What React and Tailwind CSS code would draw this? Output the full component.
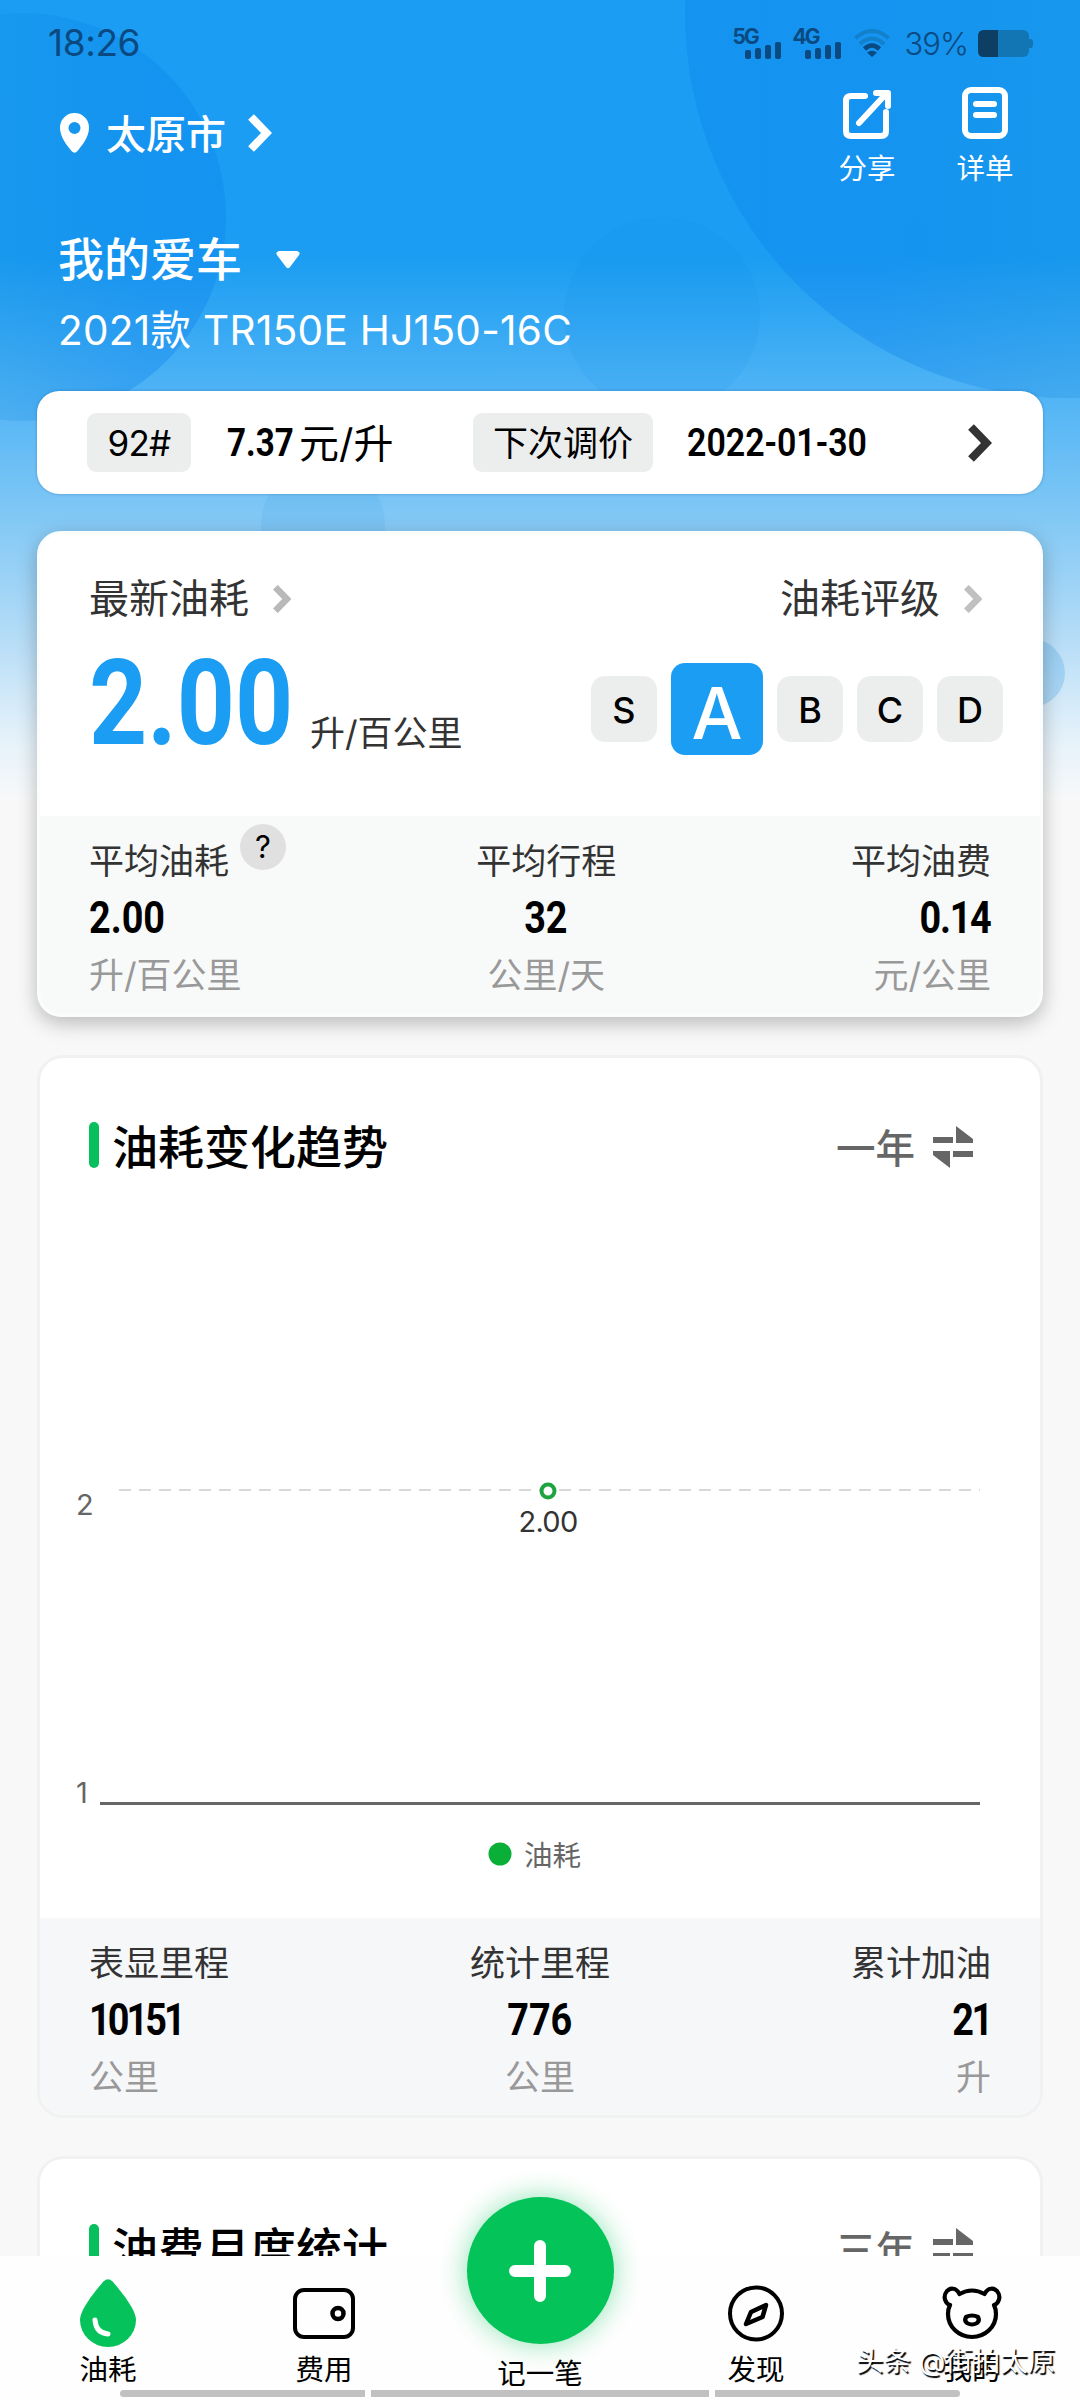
const tripStats = [
  { label: '平均油耗', value: '2.00', unit: '升/百公里', help: true },
  { label: '平均行程', value: '32', unit: '公里/天' },
  { label: '平均油费', value: '0.14', unit: '元/公里', fit: 'tracking-[-1.5px]' },
];

const totalStats = [
  { label: '表显里程', value: '10151', unit: '公里', fit: 'tracking-[-3.5px]' },
  { label: '统计里程', value: '776', unit: '公里' },
  { label: '累计加油', value: '21', unit: '升', fit: 'tracking-[-3px]' },
];

const grades = ['S', 'A', 'B', 'C', 'D'];

const Chevron = ({ className, width = 8 }) => (
  <svg viewBox="0 0 24 38" fill="none" stroke="currentColor" strokeWidth={width} className={className}>
    <path d="M3 3 L18.5 19 L3 35" />
  </svg>
);

const Signal = ({ label }) => (
  <div className="relative w-[48px] h-[32px]">
    <span className="absolute left-0 top-0 text-[21px] leading-[20px] font-bold tracking-[-2px]">{label}</span>
    <svg viewBox="0 0 36 17" className="absolute right-0 bottom-0 w-[36px] h-[17px]" fill="currentColor">
      <rect x="0" y="8" width="6" height="9" rx="2" />
      <rect x="10" y="6" width="6" height="11" rx="2" />
      <rect x="20" y="3" width="6" height="14" rx="2" />
      <rect x="30" y="0" width="6" height="17" rx="2" />
    </svg>
  </div>
);

const SwapIcon = () => (
  <svg viewBox="0 0 40 42" className="w-[40px] h-[42px] mt-[4px]" fill="#666">
    <path d="M0 11h20v6H0zM23 0l17 13v4H23zM0 25h17v17L0 29zM20 25h20v6H20z" />
  </svg>
);

const StatusBar = () => (
  <div className="h-[84px] shrink-0 pt-[25px] pl-[48px] pr-[47px] flex items-start justify-between text-[#0b4a80]">
    <span className="text-[37px] leading-[36px] tracking-[-0.4px]">18:26</span>
    <div className="flex items-start">
      <div className="flex gap-[12px] pt-[2px]">
        <Signal label="5G" />
        <Signal label="4G" />
      </div>
      <svg viewBox="0 0 36 28" className="w-[36px] h-[28px] ml-[13px] mt-[4px]" fill="none" strokeWidth="4">
        <path d="M1.5 9 Q18 -5 34.5 9" stroke="#1280cb" />
        <path d="M6 15 Q18 4 30 15" stroke="#1280cb" />
        <path d="M10.5 20 Q18 13 25.5 20" stroke="currentColor" strokeWidth="4.5" />
        <path d="M13 23.5 Q18 20 23 23.5 L18 28z" fill="currentColor" />
      </svg>
      <span className="ml-[15px] mt-[3px] text-[31px] leading-[31px] font-light tracking-[-1px]">39%</span>
      <svg viewBox="0 0 55 28" className="w-[55px] h-[28px] ml-[10px] mt-[5px]">
        <rect x="0" y="0" width="51" height="27" rx="6" fill="#1275b4" />
        <path d="M50 9h3q2 0 2 4.500t-2 4.500h-3z" fill="#1275b4" />
        <path d="M20 0H6Q0 0 0 6v15q0 6 6 6h14z" fill="#0c3f63" />
      </svg>
    </div>
  </div>
);

const Backdrop = () => (
  <svg viewBox="0 0 1080 800" className="absolute left-0 top-0 w-[1080px] h-[800px]">
    <defs>
      <linearGradient id="sky" x1="0" y1="0" x2="0" y2="1">
        <stop offset="0" stopColor="#1a9df3" />
        <stop offset="0.32" stopColor="#1a9df2" />
        <stop offset="0.48" stopColor="#4cb2f5" />
        <stop offset="0.64" stopColor="#7fc7f5" />
        <stop offset="0.8" stopColor="#b6ddf7" />
        <stop offset="0.92" stopColor="#e4f1fa" />
        <stop offset="1" stopColor="#f8f9f9" />
      </linearGradient>
      {/* the two large discs fade out towards the screen edges */}
      <linearGradient id="discLeft" x1="0" y1="0" x2="1" y2="0">
        <stop offset="0.45" stopColor="#0a80d8" stopOpacity="0.16" />
        <stop offset="0.8" stopColor="#0a80ec" stopOpacity="0.34" />
      </linearGradient>
      <linearGradient id="discRight" x1="0" y1="0" x2="1" y2="0">
        <stop offset="0.25" stopColor="#0a80ec" stopOpacity="0.34" />
        <stop offset="0.5" stopColor="#0a80d8" stopOpacity="0.2" />
      </linearGradient>
    </defs>
    <rect width="1080" height="800" fill="url(#sky)" />
    <circle cx="22" cy="217" r="204" fill="url(#discLeft)" />
    <circle cx="1070" cy="13" r="385" fill="url(#discRight)" />
    <circle cx="662" cy="315" r="98" fill="#0c88e4" opacity="0.1" />
    <circle cx="323" cy="525" r="62" fill="#3d9fe0" opacity="0.14" />
    <circle cx="1031" cy="673" r="34" fill="#3d9fe0" opacity="0.27" />
  </svg>
);

const Header = () => (
  <div className="shrink-0 text-white">
    <div className="h-[138px] pl-[60px] pr-[66px] flex justify-between">
      <div className="flex items-center h-[98px]">
        <svg viewBox="0 0 29 40" className="w-[29px] h-[40px]" fill="#fff">
          <path fillRule="evenodd" d="M14.500 0a14.500 14.500 0 0 1 14.500 15c0 9-7 17.500-11.500 23q-3 3.500-6 0C7 32.500 0 24 0 15A14.500 14.500 0 0 1 14.500 0zm0 9a6 6 0 1 0 0 12 6 6 0 0 0 0-12z" />
        </svg>
        <span className="ml-[17px] mt-[3px] text-[40px] leading-[40px] font-medium">太原市</span>
        <Chevron className="w-[24px] h-[38px] ml-[22px]" />
      </div>
      <div className="flex gap-[60px] text-[28.5px] leading-[30px]">
        <div className="w-[58px] flex flex-col items-center">
          <svg viewBox="0 0 50 52" className="w-[50px] h-[52px] mt-[3px]" fill="none" stroke="#fff" strokeWidth="6" strokeLinecap="round" strokeLinejoin="round">
            <path d="M23 9H9Q4 9 4 14v30q0 5 5 5h30q5 0 5-5V25" />
            <path d="M17 36L43 8M34 6h12v13" />
          </svg>
          <span className="mt-[15px]">分享</span>
        </div>
        <div className="w-[58px] flex flex-col items-center">
          <svg viewBox="0 0 48 52" className="w-[48px] h-[52px] mt-[3px]" fill="none" stroke="#fff" strokeWidth="6" strokeLinecap="round">
            <rect x="4" y="3" width="40" height="46" rx="6" />
            <path d="M15 17h18M15 28h18" />
          </svg>
          <span className="mt-[15px]">详单</span>
        </div>
      </div>
    </div>
    <div className="pl-[58px] h-[76px] flex items-center">
      <span className="-mt-[2px] text-[46px] leading-[46px] font-medium">我的爱车</span>
      <svg viewBox="0 0 24 18" className="w-[24px] h-[18px] ml-[34px]" fill="#fff">
        <path d="M3 0h18q4 1 2 4L14 16q-2 2.500-4 0L1 4Q-1 1 3 0z" />
      </svg>
    </div>
    <div className="pl-[58px] h-[93px] pt-[9px] text-[40.5px] leading-[48px] tracking-[0.3px] whitespace-nowrap">2021款 TR150E HJ150-16C</div>
  </div>
);

const PriceCard = () => (
  <div className="h-[103px] mx-[37px] shrink-0 rounded-[22px] bg-white flex items-center pl-[50px] pr-[51px] text-black whitespace-nowrap shadow-[0_0_3px_rgba(0,60,110,0.35)]">
    <div className="w-[104px] h-[59px] pt-[2px] rounded-[9px] bg-[#eceeed] flex items-center justify-center text-[35px] tracking-[-0.7px]">92#</div>
    <div className="w-[245px] ml-[36px] flex items-center">
      <span className="w-[72px]"><span className="inline-block origin-left scale-x-[0.85] text-[39px] leading-[44px] font-bold font-[Roboto]">7.37</span></span>
      <span className="mt-[2px] text-[40px] leading-[44px]">元/升</span>
    </div>
    <div className="w-[180px] h-[59px] pt-[2px] ml-px rounded-[9px] bg-[#eceeed] flex items-center justify-center text-[35px]">下次调价</div>
    <span className="ml-[34px] inline-block origin-left scale-x-[0.87] text-[39px] leading-[44px] font-semibold font-[Roboto]">2022-01-30</span>
    <Chevron className="w-[24px] h-[38px] ml-auto text-[#333]" />
  </div>
);

const Stats = ({ items }) => (
  <div className="flex justify-between pl-[49px] pr-[49px] pt-[26px] whitespace-nowrap">
    {items.map((s, i) => {
      const align = i === 0 ? 'items-start' : i === 1 ? 'items-center' : 'items-end';
      const origin = i === 0 ? 'origin-left' : i === 1 ? 'origin-center' : 'origin-right';
      return (
        <div key={s.label} className={`flex flex-col ${align}`}>
          <div className="relative text-[35px] leading-[38px] text-[#333]">
            {s.label}
            {s.help && (
              <span className="absolute left-[151px] top-[-18px] w-[46px] h-[46px] rounded-full bg-[#e0e0e0] text-black text-[31px] leading-[46px] text-center">?</span>
            )}
          </div>
          <div className={`mt-[14px] h-[48px] text-[45px] leading-[48px] font-bold font-[Roboto] text-black scale-x-[0.84] ${origin} ${s.fit || ''}`}>{s.value}</div>
          <div className="mt-[14px] text-[35px] leading-[38px] text-[#999]">{s.unit}</div>
        </div>
      );
    })}
  </div>
);

const SummaryCard = () => (
  <div className="mx-[37px] mt-[37px] h-[486px] shrink-0 rounded-[24px] bg-white border-[3px] border-[#fbfdfd] overflow-hidden shadow-[0_6px_20px_rgba(0,0,0,0.26)] flex flex-col">
    <div className="h-[282px] pl-[49px] pr-[37px] text-[#333]">
      <div className="pt-[44px] flex items-center text-[40px] leading-[42px]">
        <span>最新油耗</span>
        <Chevron className="w-[18px] h-[28px] ml-[24px] text-[#b9b9b9]" width={9} />
        <span className="ml-auto">油耗评级</span>
        <Chevron className="w-[18px] h-[28px] ml-[24px] mr-[21px] text-[#c0c0c0]" width={9} />
      </div>
      <div className="mt-[43px] flex items-center">
        <div className="w-[221px] h-[92px] flex items-center">
          <span className="-mt-[11px] inline-block origin-left scale-x-[0.86] text-[118px] leading-[92px] font-bold font-[Roboto] text-[#1a9df2]">2.00</span>
        </div>
        <span className="text-[35px] leading-[38px] mt-[48px]">升/百公里</span>
        <div className="ml-auto flex items-center gap-[14px]">
          {grades.map(g => g === 'A' ? (
            <div key={g} className="w-[92px] h-[92px] rounded-[14px] bg-[#1a9df2] text-white text-[72px] leading-[100px] font-medium text-center">{g}</div>
          ) : (
            <div key={g} className="w-[66px] h-[66px] rounded-[14px] bg-[#eceeed] text-black text-[36px] leading-[69px] font-medium text-center">{g}</div>
          ))}
        </div>
      </div>
    </div>
    <div className="flex-1 bg-[#f8faf9]"><Stats items={tripStats} /></div>
  </div>
);

const CardTitle = ({ title, range }) => (
  <div className="pl-[49px] pr-[67px] flex items-center h-[46px]">
    <span className="w-[10px] h-[46px] rounded-full bg-[#07bf5f]" />
    <span className="ml-[13px] mt-[4px] text-[46px] leading-[46px] font-medium text-black">{title}</span>
    <span className="ml-auto mr-[18px] mt-[8px] text-[39.5px] leading-[44px] font-medium text-[#666]">{range}</span>
    <SwapIcon />
  </div>
);

const TrendChart = () => (
  <svg viewBox="0 0 1000 748" className="w-[1000px] h-[748px] mt-[2px]" fontFamily="Inter, 'Noto Sans CJK SC', sans-serif">
    <path d="M79 320H940" stroke="#d8d8d8" strokeWidth="2" strokeDasharray="12 8" />
    <path d="M60 633.500H940" stroke="#666" strokeWidth="3" />
    <text x="36" y="345" fontSize="29" fill="#666">2</text>
    <text x="36" y="633" fontSize="29" fill="#666">1</text>
    <circle cx="508" cy="321" r="6.500" fill="#fff" stroke="#1da33f" strokeWidth="4" />
    <text x="508" y="362" fontSize="29" letterSpacing="-0.700" fill="#333" textAnchor="middle">2.00</text>
    <circle cx="460" cy="684" r="11.500" fill="#0aaf38" />
    <text x="484" y="696" fontSize="28.500" fill="#666">油耗</text>
  </svg>
);

const TrendCard = () => (
  <div className="mx-[37px] mt-[38px] h-[1063px] shrink-0 rounded-[26px] bg-white border-[3px] border-[#f0f1f1] overflow-hidden flex flex-col">
    <div className="h-[860px] pt-[64px]">
      <CardTitle title="油耗变化趋势" range="一年" />
      <TrendChart />
    </div>
    <div className="flex-1 bg-[#f6f7f9]"><Stats items={totalStats} /></div>
  </div>
);

const MonthlyCard = () => (
  <div className="mx-[37px] mt-[38px] h-[400px] shrink-0 rounded-[26px] bg-white border-[3px] border-[#f0f1f1] pt-[65px]">
    <CardTitle title="油费月度统计" range="三年" />
  </div>
);

const TabBar = () => {
  const tabs = [
    {
      label: '油耗',
      icon: (
        <svg viewBox="0 0 56 68" className="w-[56px] h-[68px]">
          <path d="M23.500 2.500q4.500-4.500 9 0C39 10 56 30 56 41A28 27 0 0 1 0 41C0 30 17 10 23.500 2.500z" fill="#06c25a" />
          <path d="M15 41Q16 54 28 55" fill="none" stroke="#fff" strokeWidth="5" strokeLinecap="round" />
        </svg>
      ),
    },
    {
      label: '费用',
      icon: (
        <svg viewBox="0 0 62 68" className="w-[62px] h-[68px]" fill="none" stroke="#000" strokeWidth="4">
          <rect x="2" y="11" width="58" height="47" rx="9" />
          <circle cx="45" cy="34.500" r="5.500" strokeWidth="4.500" />
        </svg>
      ),
    },
    { label: '记一笔' },
    {
      label: '发现',
      icon: (
        <svg viewBox="0 0 60 68" className="w-[60px] h-[68px]" fill="none" stroke="#000" strokeWidth="4" strokeLinejoin="round">
          <circle cx="30" cy="34.500" r="26" />
          <path d="M40 26L36.500 38L20 45L25 33z" strokeWidth="4.500" />
        </svg>
      ),
    },
    {
      label: '我的',
      icon: (
        <svg viewBox="0 0 60 68" className="w-[60px] h-[68px]" fill="none" stroke="#000" strokeWidth="4.200" strokeLinejoin="round">
          <path d="M17.500 15Q30 8 42.500 15C46 8 52 9 55 12C60 18 56 25 52 26Q54 30 54 35A24 23 0 0 1 6 35Q6 30 8 26C4 25 0 18 5 12C8 9 14 8 17.500 15z" />
          <path d="M24 38Q30 35 36 38Q38 42 35 44Q30 47 25 44Q22 42 24 38z" />
        </svg>
      ),
    },
  ];
  return (
    <div className="absolute inset-x-0 bottom-0 h-[144px] bg-[#fefefe] text-black">
      <div className="grid grid-cols-5 h-[134px] pt-[23px] text-[28.5px] leading-[32px]">
        {tabs.map(t => t.icon ? (
          <div key={t.label} className="flex flex-col items-center">
            {t.icon}
            <span className="mt-[7px]">{t.label}</span>
          </div>
        ) : (
          <div key={t.label} className="flex flex-col items-center">
            <div className="-mt-[82px] w-[147px] h-[147px] shrink-0 rounded-full bg-[#03c359] shadow-[0_0_28px_rgba(3,195,89,0.45)] flex items-center justify-center">
              <svg viewBox="0 0 64 64" className="w-[64px] h-[64px]" stroke="#fff" strokeWidth="12" strokeLinecap="round">
                <path d="M32 7V57M7 32H57" />
              </svg>
            </div>
            <span className="mt-[14px]">{t.label}</span>
          </div>
        ))}
      </div>
      <div className="absolute left-[120px] bottom-[3px] w-[840px] h-[7px] rounded-full overflow-hidden flex gap-[6px]">
        <span className="w-[245px] bg-[#c1c1c1]" />
        <span className="w-[338px] bg-[#c1c1c1]" />
        <span className="w-[245px] bg-[#c1c1c1]" />
      </div>
      <span className="absolute left-[856px] top-[89px] text-[27.5px] leading-[32px] text-white whitespace-nowrap [text-shadow:1.5px_1.5px_1px_#000]">头条 @街拍太原</span>
    </div>
  );
};

export default function App() {
  return (
    <div className="relative w-[1080px] h-[2400px] overflow-hidden bg-[#f8f8f8] font-[Inter,'Noto_Sans_CJK_SC',sans-serif]">
      <Backdrop />
      <div className="relative flex flex-col h-full">
        <StatusBar />
        <Header />
        <PriceCard />
        <SummaryCard />
        <TrendCard />
        <MonthlyCard />
      </div>
      <TabBar />
    </div>
  );
}
